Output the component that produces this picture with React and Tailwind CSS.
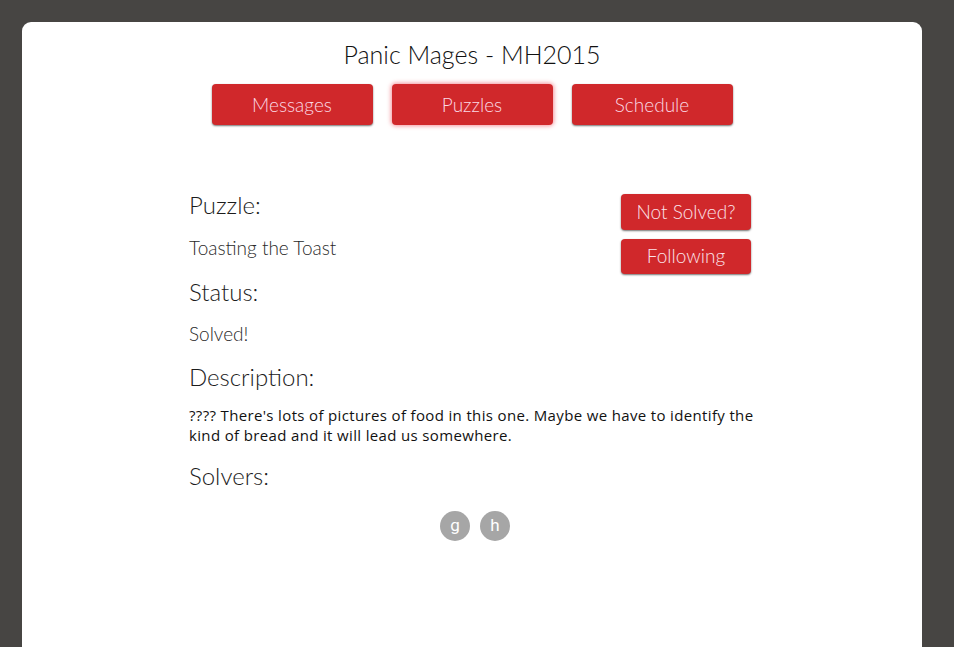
const navItems = ["Messages", "Puzzles", "Schedule"];
const solvers = ["g", "h"];

const Label = ({ children, className = "" }) => (
  <div className={"text-[24px] leading-[30px] font-light text-[#1c1c1c] " + className}>
    {children}
  </div>
);

const Value = ({ children, className = "" }) => (
  <div className={"text-[19px] leading-[24px] font-light text-[#2a2a2a] " + className}>
    {children}
  </div>
);

export default function App() {
  return (
    <div
      className="min-h-screen bg-[#474543] pl-[22px] pt-[22px] flex flex-col"
      style={{ fontFamily: "Lato, 'Noto Sans', sans-serif" }}
    >
      <div className="flex-1 w-[900px] bg-white rounded-t-[9px] pt-[16px]">
        <h1 className="text-center text-[25px] leading-[32px] font-light text-[#111]">
          Panic Mages - MH2015
        </h1>
        <nav className="flex justify-center gap-[19px] mt-[14px]">
          {navItems.map((item) => (
            <button
              key={item}
              className={
                "w-[161px] h-[41px] pt-[2px] rounded-[4px] bg-[#d0282b] text-[#fbd9e4] text-[19px] font-light " +
                (item === "Puzzles"
                  ? "shadow-[0_0_4px_1px_rgba(240,120,130,0.8)]"
                  : "shadow-[0_1px_2px_rgba(0,0,0,0.55)]")
              }
            >
              {item}
            </button>
          ))}
        </nav>

        <div className="w-[562px] ml-[167px] mt-[65px] flex">
          <div className="flex-1 min-w-0 flex flex-col">
            <Label>Puzzle:</Label>
            <Value className="mt-[16px]">Toasting the Toast</Value>
            <Label className="mt-[17px]">Status:</Label>
            <Value className="mt-[15px]">Solved!</Value>
            <Label className="mt-[16px]">Description:</Label>
            <p
              className="mt-[13px] w-[572px] text-[15px] tracking-[0.35px] leading-[20px] text-[#111]"
              style={{ fontFamily: "'Open Sans', sans-serif" }}
            >
              ???? There's lots of pictures of food in this one. Maybe we have to identify the
              kind of bread and it will lead us somewhere.
            </p>
            <Label className="mt-[16px]">Solvers:</Label>
          </div>
          <div className="flex flex-col gap-[9px] pt-[4px]">
            <button className="w-[130px] h-[36px] rounded-[4px] bg-[#d0282b] text-[#fbe3ea] text-[19px] font-light shadow-[0_1px_2px_rgba(0,0,0,0.55)]">
              Not Solved?
            </button>
            <button className="w-[130px] h-[35px] rounded-[4px] bg-[#d0282b] text-[#fbe3ea] text-[19px] font-light shadow-[0_1px_2px_rgba(0,0,0,0.55)]">
              Following
            </button>
          </div>
        </div>

        <div className="flex justify-center gap-[10px] mt-[20px] pl-[6px]">
          {solvers.map((s) => (
            <div
              key={s}
              className="w-[30px] h-[30px] rounded-full bg-[#a6a6a6] text-white text-[17px] flex items-center justify-center"
              style={{ fontFamily: "Roboto, sans-serif" }}
            >
              {s}
            </div>
          ))}
        </div>
      </div>
    </div>
  );
}
